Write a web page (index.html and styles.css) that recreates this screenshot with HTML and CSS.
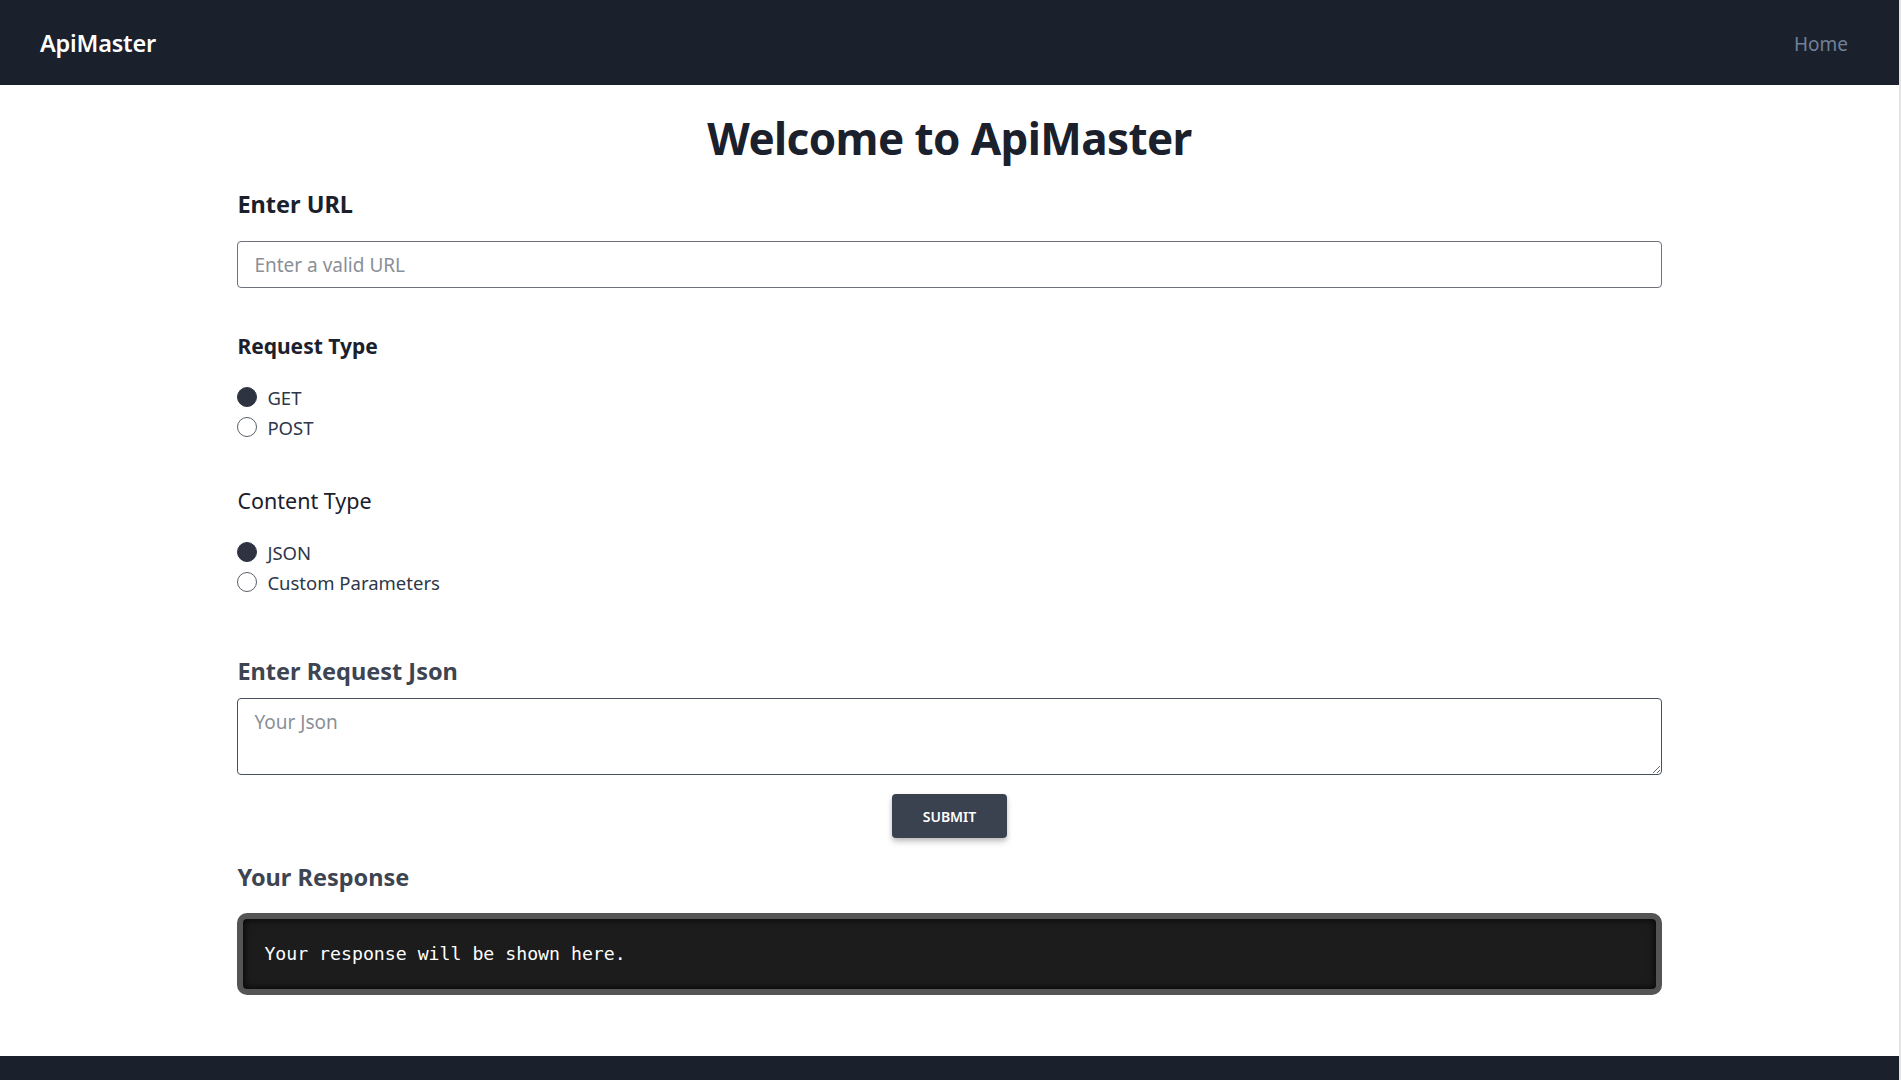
FILE: index.html
```html
<!DOCTYPE html>
<html lang="en">
<head>
<meta charset="utf-8">
<title>ApiMaster</title>
<link rel="stylesheet" href="styles.css">
</head>
<body>
<div class="page">
  <nav class="navbar">
    <a class="brand" href="#">ApiMaster</a>
    <a class="nav-link" href="#">Home</a>
  </nav>
  <main class="main">
    <h1 class="title">Welcome to ApiMaster</h1>
    <form class="form" onsubmit="return false">
      <label class="label-lg" for="url">Enter URL</label>
      <input class="text-input" id="url" type="text" placeholder="Enter a valid URL">

      <div class="label-md label-bold">Request Type</div>
      <div class="radio-group">
        <label class="radio-row"><input type="radio" name="req" class="radio" checked><span>GET</span></label>
        <label class="radio-row"><input type="radio" name="req" class="radio"><span>POST</span></label>
      </div>

      <div class="label-md label-content">Content Type</div>
      <div class="radio-group">
        <label class="radio-row"><input type="radio" name="ct" class="radio" checked><span>JSON</span></label>
        <label class="radio-row"><input type="radio" name="ct" class="radio"><span>Custom Parameters</span></label>
      </div>

      <label class="label-lg label-soft label-json" for="json">Enter Request Json</label>
      <textarea class="text-area" id="json" placeholder="Your Json"></textarea>

      <div class="submit-wrap">
        <button class="submit" type="submit">Submit</button>
      </div>

      <div class="label-lg label-soft label-resp">Your Response</div>
      <div class="response"><code>Your response will be shown here.</code></div>
    </form>
  </main>
  <footer class="footer"></footer>
</div>
</body>
</html>
```

FILE: styles.css
```css
* { box-sizing: border-box; }
html { background: #e4e4e4; }
body {
  margin: 0;
  font-family: "Noto Sans", "Open Sans", sans-serif;
  color: #1a202c;
}
.page {
  width: 1899px;
  height: 1080px;
  background: #ffffff;
  display: flex;
  flex-direction: column;
  overflow: hidden;
}
.navbar {
  height: 85px;
  flex: 0 0 85px;
  background: #1a202c;
  display: flex;
  align-items: center;
  justify-content: space-between;
  padding: 0 51px 0 40px;
}
.brand {
  color: #ffffff;
  text-decoration: none;
  font-size: 23.5px;
  font-weight: 600;
  letter-spacing: -0.2px;
  margin-top: 1px;
}
.nav-link {
  color: #718096;
  text-decoration: none;
  font-size: 19px;
  margin-top: 2px;
}
.main {
  flex: 1 1 auto;
  width: 75%;
  margin: 0 auto;
  padding-top: 29px;
}
.title {
  margin: 0;
  text-align: center;
  font-size: 44px;
  line-height: 48px;
  font-weight: 700;
  letter-spacing: -0.6px;
  color: #1a202c;
}
.form {
  display: flex;
  flex-direction: column;
  align-items: stretch;
}
.label-lg {
  display: block;
  font-size: 23.5px;
  line-height: 30px;
  font-weight: 700;
  color: #1a202c;
  margin-top: 27px;
}
.label-soft { color: #3d4452; }
.label-json { margin-top: 59px; }
.label-resp { margin-top: 24px; }
.text-input {
  margin-top: 22px;
  height: 47px;
  border: 1px solid #6e7279;
  border-radius: 4px;
  padding: 0 16px;
  font-family: inherit;
  font-size: 19px;
  color: #1a202c;
  outline: none;
}
.text-input::placeholder, .text-area::placeholder { color: #8a8f98; }
.label-md {
  font-size: 21.5px;
  line-height: 26px;
  margin-top: 45px;
  color: #1a202c;
}
.label-bold { font-weight: 700; font-size: 21px; }
.label-content { font-weight: 400; margin-top: 46px; }
.radio-group {
  margin-top: 23px;
  display: flex;
  flex-direction: column;
}
.radio-row {
  display: flex;
  align-items: center;
  height: 30px;
  font-size: 18.5px;
  color: #2d3748;
  cursor: pointer;
}
.radio-row span { margin-left: 10px; }
.radio {
  -webkit-appearance: none;
  appearance: none;
  margin: 0;
  width: 20px;
  height: 20px;
  border-radius: 50%;
  border: 1.5px solid #5a5f66;
  background: #ffffff;
}
.radio:checked {
  background: #2d3340;
  border-color: #2d3340;
}
.text-area {
  margin-top: 12px;
  height: 77px;
  border: 1px solid #4a5060;
  border-radius: 4px;
  padding: 11px 16px;
  font-family: inherit;
  font-size: 19px;
  line-height: 24px;
  color: #1a202c;
  outline: none;
  resize: vertical;
}
.submit-wrap {
  margin-top: 19px;
  display: flex;
  justify-content: center;
}
.submit {
  width: 115px;
  height: 44px;
  border: none;
  border-radius: 4px;
  background: #3a4250;
  color: #ffffff;
  font-family: inherit;
  font-size: 14px;
  font-weight: 600;
  text-transform: uppercase;
  box-shadow: 0 4px 6px rgba(0,0,0,0.18), 0 2px 4px rgba(0,0,0,0.12);
  cursor: pointer;
}
.response {
  margin-top: 21px;
  height: 82px;
  border: 6px solid #555555;
  border-radius: 10px;
  background: #1c1c1c;
  box-shadow: inset 0 0 8px rgba(0,0,0,0.9);
  display: flex;
  align-items: center;
  padding: 0 21px 1px;
}
.response code {
  font-family: "DejaVu Sans Mono", "Liberation Mono", monospace;
  font-size: 18.2px;
  color: #ffffff;
}
.footer {
  flex: 0 0 24px;
  background: #1a202c;
}
```
